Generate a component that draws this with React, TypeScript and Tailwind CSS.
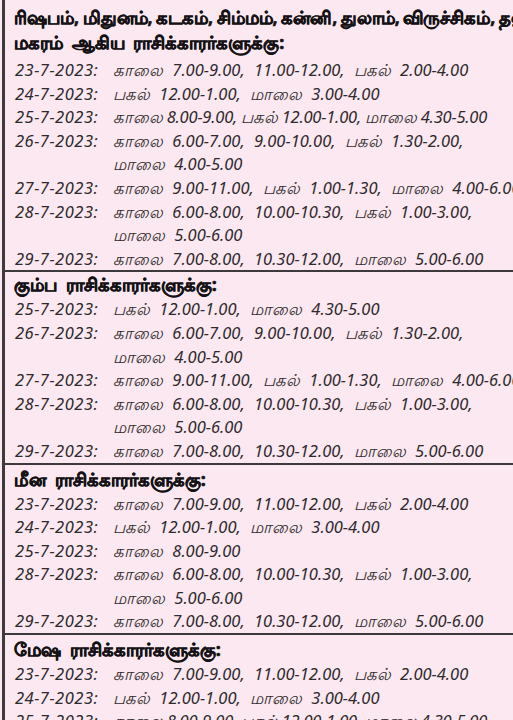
type Row = { date: string; lines: string[]; tight?: boolean };
type Section = { title: string[]; rows: Row[] };

const sections: Section[] = [
  {
    title: [
      "ரிஷபம், மிதுனம், கடகம், சிம்மம், கன்னி, துலாம், விருச்சிகம், தனு,",
      "மகரம் ஆகிய ராசிக்காரர்களுக்கு:",
    ],
    rows: [
      { date: "23-7-2023:", lines: ["காலை 7.00-9.00, 11.00-12.00, பகல் 2.00-4.00"] },
      { date: "24-7-2023:", lines: ["பகல் 12.00-1.00, மாலை 3.00-4.00"] },
      { date: "25-7-2023:", lines: ["காலை 8.00-9.00, பகல் 12.00-1.00, மாலை 4.30-5.00"], tight: true },
      { date: "26-7-2023:", lines: ["காலை 6.00-7.00, 9.00-10.00, பகல் 1.30-2.00,", "மாலை 4.00-5.00"] },
      { date: "27-7-2023:", lines: ["காலை 9.00-11.00, பகல் 1.00-1.30, மாலை 4.00-6.00"] },
      { date: "28-7-2023:", lines: ["காலை 6.00-8.00, 10.00-10.30, பகல் 1.00-3.00,", "மாலை 5.00-6.00"] },
      { date: "29-7-2023:", lines: ["காலை 7.00-8.00, 10.30-12.00, மாலை 5.00-6.00"] },
    ],
  },
  {
    title: ["கும்ப ராசிக்காரர்களுக்கு:"],
    rows: [
      { date: "25-7-2023:", lines: ["பகல் 12.00-1.00, மாலை 4.30-5.00"] },
      { date: "26-7-2023:", lines: ["காலை 6.00-7.00, 9.00-10.00, பகல் 1.30-2.00,", "மாலை 4.00-5.00"] },
      { date: "27-7-2023:", lines: ["காலை 9.00-11.00, பகல் 1.00-1.30, மாலை 4.00-6.00"] },
      { date: "28-7-2023:", lines: ["காலை 6.00-8.00, 10.00-10.30, பகல் 1.00-3.00,", "மாலை 5.00-6.00"] },
      { date: "29-7-2023:", lines: ["காலை 7.00-8.00, 10.30-12.00, மாலை 5.00-6.00"] },
    ],
  },
  {
    title: ["மீன ராசிக்காரர்களுக்கு:"],
    rows: [
      { date: "23-7-2023:", lines: ["காலை 7.00-9.00, 11.00-12.00, பகல் 2.00-4.00"] },
      { date: "24-7-2023:", lines: ["பகல் 12.00-1.00, மாலை 3.00-4.00"] },
      { date: "25-7-2023:", lines: ["காலை 8.00-9.00"] },
      { date: "28-7-2023:", lines: ["காலை 6.00-8.00, 10.00-10.30, பகல் 1.00-3.00,", "மாலை 5.00-6.00"] },
      { date: "29-7-2023:", lines: ["காலை 7.00-8.00, 10.30-12.00, மாலை 5.00-6.00"] },
    ],
  },
  {
    title: ["மேஷ ராசிக்காரர்களுக்கு:"],
    rows: [
      { date: "23-7-2023:", lines: ["காலை 7.00-9.00, 11.00-12.00, பகல் 2.00-4.00"] },
      { date: "24-7-2023:", lines: ["பகல் 12.00-1.00, மாலை 3.00-4.00"] },
      { date: "25-7-2023:", lines: ["காலை 8.00-9.00, பகல் 12.00-1.00, மாலை 4.30-5.00"], tight: true },
    ],
  },
];

// heading box per section, tuned to the print's uneven spacing
const headPad = ["pt-[5px] pb-[3px]", "pt-0 pb-0", "pt-[2px] pb-0", "pt-[2px] pb-0"];

export default function App() {
  return (
    <div className="h-[720px] w-[513px] overflow-hidden bg-[#fbe8f0] pl-[2px]">
      <div className="h-full border-l-[3px] border-[#3d3a3c] font-['Noto_Sans',sans-serif]">
        {sections.map((s, i) => (
          <div key={i} className={i > 0 ? "border-t-2 border-[#3d3a3c]" : ""}>
            <div className={`${headPad[i]} pl-[9px]`}>
              {s.title.map((t, j) => (
                <div
                  key={t}
                  className={`whitespace-nowrap font-bold leading-[25px] text-[#141214] [-webkit-text-stroke:0.6px_#141214] ${
                    j === 0 && i === 0 ? "text-[17.5px] [word-spacing:-1px]" : "text-[18px] [word-spacing:4px]"
                  }`}
                >
                  {t}
                </div>
              ))}
            </div>
            {s.rows.map((r) => (
              <div key={r.date} className="grid grid-cols-[98px_1fr] pl-[10px] text-[16.5px] italic text-[#2f2a2d]">
                <div className="whitespace-nowrap leading-[23.6px] tracking-[0.5px]">{r.date}</div>
                <div className="whitespace-nowrap">
                  {r.lines.map((l) => (
                    <div
                      key={l}
                      className={
                        r.tight
                          ? "leading-[23.6px] tracking-[-0.2px] [word-spacing:0px]"
                          : "leading-[23.6px] [word-spacing:5px]"
                      }
                    >
                      {l}
                    </div>
                  ))}
                </div>
              </div>
            ))}
          </div>
        ))}
      </div>
    </div>
  );
}
